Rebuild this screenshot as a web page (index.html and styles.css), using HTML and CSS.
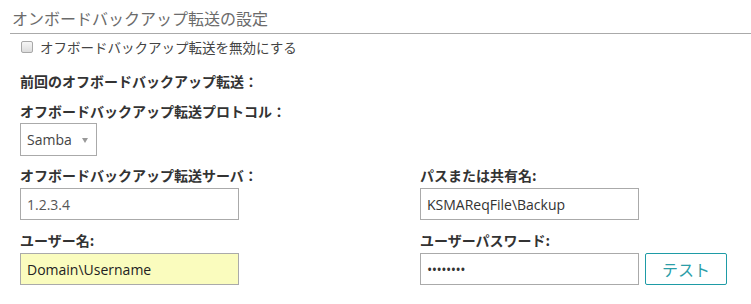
FILE: index.html
```html
<!DOCTYPE html>
<html lang="ja">
<head>
<meta charset="utf-8">
<title>オンボードバックアップ転送の設定</title>
<link rel="stylesheet" href="styles.css">
</head>
<body>
<div class="panel">
  <h2 class="title">オンボードバックアップ転送の設定</h2>
  <div class="body">
    <label class="check"><input type="checkbox" class="cb"><span>オフボードバックアップ転送を無効にする</span></label>
    <div class="label first">前回のオフボードバックアップ転送：</div>
    <div class="label second">オフボードバックアップ転送プロトコル：</div>
    <div class="select"><span>Samba</span><span class="arrow"></span></div>
    <div class="grid">
      <div class="field">
        <div class="label">オフボードバックアップ転送サーバ：</div>
        <div class="input muted">1.2.3.4</div>
      </div>
      <div class="field">
        <div class="label">パスまたは共有名:</div>
        <div class="input">KSMAReqFile\Backup</div>
      </div>
      <div class="field">
        <div class="label">ユーザー名:</div>
        <div class="input autofill">Domain\Username</div>
      </div>
      <div class="field">
        <div class="label">ユーザーパスワード:</div>
        <div class="inline">
          <div class="input pw">••••••••</div>
          <button class="btn">テスト</button>
        </div>
      </div>
    </div>
  </div>
</div>
</body>
</html>
```

FILE: styles.css
```css
html, body {
  margin: 0;
  padding: 0;
  background: #fff;
}
body {
  font-family: "Open Sans", "Noto Sans CJK JP", sans-serif;
  color: #333;
  width: 751px;
  height: 304px;
  overflow: hidden;
}
.panel {
  padding-left: 10px;
}
.title {
  margin: 0;
  font-weight: normal;
  font-size: 16px;
  line-height: 24px;
  padding: 6px 0 3px 2px;
  color: #6b6b6b;
  border-bottom: 1px solid #aaa;
  font-family: "Noto Sans CJK JP", sans-serif;
}
.body {
  padding-left: 10px;
}
.check {
  display: flex;
  align-items: center;
  height: 26px;
  font-size: 13.5px;
  color: #444;
  font-family: "Noto Sans CJK JP", sans-serif;
}
.cb {
  appearance: none;
  -webkit-appearance: none;
  box-sizing: border-box;
  margin: 0 7px 0 1px;
  width: 12px;
  height: 12px;
  border: 1px solid #a8a8a8;
  border-radius: 2px;
  background: linear-gradient(#f6f6f6, #dcdcdc);
}
.label {
  font-weight: bold;
  font-size: 14px;
  line-height: 20px;
  color: #333;
  font-family: "Noto Sans CJK JP", sans-serif;
  margin-bottom: 3px;
}
.label.first {
  margin-top: 11px;
  margin-bottom: 0;
}
.label.second {
  margin-top: 10px;
  margin-bottom: 2px;
}
.select {
  box-sizing: border-box;
  width: 77px;
  height: 33px;
  border: 1px solid #aaa;
  display: flex;
  align-items: center;
  justify-content: space-between;
  padding: 0 8px 0 6px;
  font-size: 14px;
  color: #444;
}
.arrow {
  width: 0;
  height: 0;
  border-left: 3px solid transparent;
  border-right: 3px solid transparent;
  border-top: 5px solid #999;
  margin-top: 1px;
}
.grid {
  display: grid;
  grid-template-columns: 400px 1fr;
  row-gap: 10px;
  margin-top: 9px;
}
.input {
  box-sizing: border-box;
  width: 219px;
  height: 32px;
  border: 1px solid #aaa;
  padding: 0 6px;
  display: flex;
  align-items: center;
  font-size: 14px;
  color: #333;
  background: #fff;
}
.input.muted {
  color: #555;
}
.input.autofill {
  background: #fafcbe;
  color: #222;
}
.input.pw {
  font-size: 14px;
  letter-spacing: -0.5px;
  color: #333;
}
.inline {
  display: flex;
  gap: 6px;
}
.btn {
  box-sizing: border-box;
  width: 82px;
  height: 32px;
  border: 1px solid #1e9ba6;
  border-radius: 2px;
  background: #fff;
  color: #2b9ea8;
  font-size: 16px;
  font-family: "Noto Sans CJK JP", sans-serif;
  padding: 0;
}
```
